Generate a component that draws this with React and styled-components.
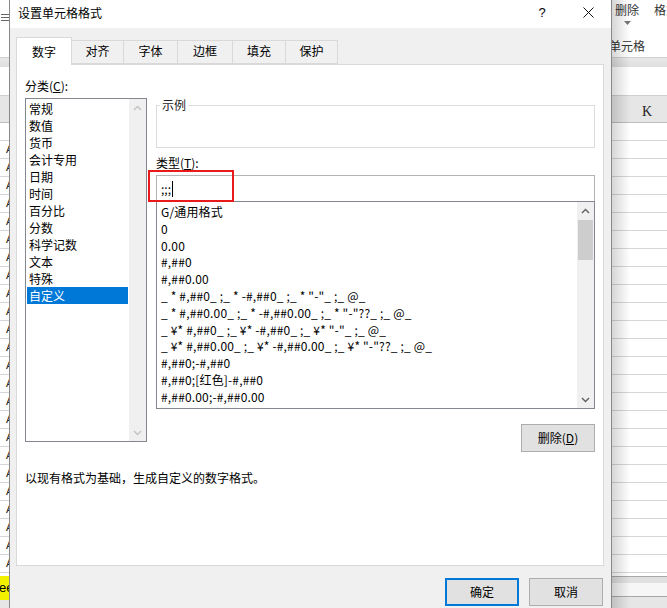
import React from 'react'
import styled, { createGlobalStyle } from 'styled-components'

const GlobalStyle = createGlobalStyle`
  html, body { margin: 0; padding: 0; }
  body {
    width: 667px;
    height: 608px;
    overflow: hidden;
    background: #fff;
    color: #000;
    font-family: "Noto Sans CJK SC", "Noto Sans", sans-serif;
    font-size: 12px;
  }
`

const categories = ['常规', '数值', '货币', '会计专用', '日期', '时间', '百分比', '分数', '科学记数', '文本', '特殊', '自定义']

const formats = [
  'G/通用格式',
  '0',
  '0.00',
  '#,##0',
  '#,##0.00',
  '_ * #,##0_ ;_ * -#,##0_ ;_ * "-"_ ;_ @_',
  '_ * #,##0.00_ ;_ * -#,##0.00_ ;_ * "-"??_ ;_ @_',
  '_ ¥* #,##0_ ;_ ¥* -#,##0_ ;_ ¥* "-"_ ;_ @_',
  '_ ¥* #,##0.00_ ;_ ¥* -#,##0.00_ ;_ ¥* "-"??_ ;_ @_',
  '#,##0;-#,##0',
  '#,##0;[红色]-#,##0',
  '#,##0.00;-#,##0.00',
]

const tabs = [
  { label: '数字', w: 56 },
  { label: '对齐', w: 53 },
  { label: '字体', w: 55 },
  { label: '边框', w: 56 },
  { label: '填充', w: 54 },
  { label: '保护', w: 53 },
]

const Screen = styled.div`
  display: flex;
  width: 667px;
  height: 608px;
  overflow: hidden;
`

/* ---------- excel backdrop ---------- */

const Strip = styled.div`
  position: relative;
  flex: ${p => (p.$grow ? 1 : 'none')};
  width: ${p => (p.$grow ? 'auto' : '9px')};
  display: flex;
  flex-direction: column;
  overflow: hidden;
  background: #fff;

  &::after {
    content: '';
    display: ${p => (p.$shadow ? 'block' : 'none')};
    position: absolute;
    left: 0;
    top: 0;
    bottom: 0;
    width: 18px;
    background: linear-gradient(to right, rgba(0, 0, 0, 0.16), rgba(0, 0, 0, 0));
    pointer-events: none;
  }
`

const Ribbon = styled.div`
  height: 57px;
  flex: none;
  display: flex;
  flex-direction: column;
  color: #333;
  white-space: nowrap;
`

const RibbonButtons = styled.div`
  display: flex;
  gap: 15px;
  padding: 2px 0 0 3px;
  line-height: 16px;
`

const RibbonButton = styled.div`
  display: flex;
  flex-direction: column;
  align-items: center;
  gap: 3px;
`

const RibbonLabel = styled.div`
  margin: 13px 0 0 -3px;
  line-height: 16px;
`

const MenuIcon = styled.div`
  padding: 8px 0 0 1px;
`

const Band = styled.div`
  height: 10px;
  flex: none;
  background: linear-gradient(#e9e9e9, #dedede);
  border-top: 1px solid #d0d0d0;
  box-sizing: border-box;
`

const FormulaBar = styled.div`
  height: 28px;
  flex: none;
  background: #fff;
`

const ColumnHeader = styled.div`
  height: 28px;
  flex: none;
  box-sizing: border-box;
  display: flex;
  align-items: flex-end;
  padding: 0 0 2px 30px;
  background: #e6e6e6;
  border-top: 1px solid #cfcfcf;
  border-bottom: 1px solid #bdbdbd;
  font-family: "Liberation Serif", serif;
  font-size: 14px;
  color: #222;
`

const Rows = styled.div`
  flex: 1;
  overflow: hidden;
`

const Row = styled.div`
  height: 17px;
  border-bottom: 1px solid #d6d6d6;
  padding-left: 6px;
  line-height: 17px;
  font-family: "Liberation Sans", sans-serif;
  font-size: 11px;
  color: #222;
  white-space: nowrap;
`

const SheetBar = styled.div`
  height: 32px;
  flex: none;
  display: flex;
  flex-direction: column;
  box-sizing: border-box;
  border-top: 1px solid #a8a8a8;
  background: #e6e6e6;
`

const SheetStripe = styled.div`
  height: 6px;
  background: #e0e0e0;
`

const SheetLane = styled.div`
  height: 13px;
  background: #f6f6f6;
  border-bottom: 1px solid #a8a8a8;
`

const SheetTab = styled.div`
  height: 24px;
  margin-top: -1px;
  background: #f2f200;
  line-height: 24px;
  font-family: "Liberation Sans", sans-serif;
  font-size: 13px;
  margin-left: -1px;
  white-space: nowrap;
`

/* ---------- dialog ---------- */

const Dialog = styled.div`
  width: 603px;
  flex: none;
  box-sizing: border-box;
  display: flex;
  flex-direction: column;
  background: #f0f0f0;
  border-left: 1px solid #8a8a8a;
  border-right: 1px solid #8a8a8a;
`

const TitleBar = styled.div`
  height: 28px;
  flex: none;
  display: flex;
  align-items: center;
  background: #fff;
  padding-left: 8px;
`

const Title = styled.div`
  flex: 1;
  line-height: 16px;
  margin-top: -2px;
`

const TitleButton = styled.div`
  width: 46px;
  height: 28px;
  display: flex;
  align-items: center;
  justify-content: center;
  margin-top: -3px;
  font-family: "Liberation Sans", sans-serif;
  font-size: 13px;
`

const Body = styled.div`
  padding: 9px 7px 0 6px;
  display: flex;
  flex-direction: column;
`

const TabRow = styled.div`
  height: 27px;
  display: flex;
  align-items: flex-end;
  position: relative;
  z-index: 1;
`

const Tab = styled.div`
  width: ${p => p.$w}px;
  height: ${p => (p.$active ? 28 : 24)}px;
  margin-left: -1px;
  margin-bottom: ${p => (p.$active ? -1 : 0)}px;
  box-sizing: border-box;
  display: flex;
  align-items: flex-end;
  justify-content: center;
  padding-bottom: ${p => (p.$active ? 5 : 4)}px;
  line-height: 16px;
  background: ${p => (p.$active ? '#fff' : '#f0f0f0')};
  border: 1px solid #d9d9d9;
  border-bottom: ${p => (p.$active ? 'none' : '1px solid #d9d9d9')};

  &:first-child { margin-left: 0; }
`

const Panel = styled.div`
  height: 502px;
  box-sizing: border-box;
  background: #fff;
  border: 1px solid #d9d9d9;
  padding: 13px 8px 0 8px;
`

const Columns = styled.div`
  display: flex;
  gap: 9px;
  align-items: flex-start;
`

const LeftColumn = styled.div`
  width: 122px;
  flex: none;
  display: flex;
  flex-direction: column;
`

const RightColumn = styled.div`
  flex: 1;
  display: flex;
  flex-direction: column;
  padding-top: 20px;
`

const FieldLabel = styled.div`
  line-height: 16px;
  margin-bottom: 4px;
  margin-top: ${p => p.$top || 0}px;
`

const ListBox = styled.div`
  height: ${p => p.$h}px;
  box-sizing: border-box;
  display: flex;
  border: 1px solid #828790;
  background: #fff;
`

const ListItems = styled.div`
  flex: 1;
  padding: ${p => p.$pad};
  overflow: hidden;
  letter-spacing: ${p => p.$spacing || 0}px;
`

const ListItem = styled.div`
  height: ${p => p.$h || 17}px;
  line-height: ${p => p.$h || 17}px;
  padding-left: ${p => p.$indent}px;
  white-space: pre;
  background: ${p => (p.$selected ? '#0078d7' : 'transparent')};
  color: ${p => (p.$selected ? '#fff' : '#000')};
`

const ScrollBar = styled.div`
  width: 17px;
  flex: none;
  display: flex;
  flex-direction: column;
  background: #f0f0f0;
`

const ScrollArrow = styled.div`
  height: 17px;
  flex: none;
  display: flex;
  align-items: center;
  justify-content: center;
`

const ScrollTrack = styled.div`
  flex: 1;
`

const ScrollThumb = styled.div`
  height: 40px;
  margin: 1px 1px 0;
  background: #cdcdcd;
`

const GroupBox = styled.fieldset`
  margin: 0;
  padding: 0;
  min-width: 0;
  border: 1px solid #dcdcdc;
`

const GroupLegend = styled.legend`
  margin-left: 3px;
  padding: 0 2px;
  line-height: 14px;
  color: #222;
`

const GroupBody = styled.div`
  height: 35px;
`

const InputWrap = styled.div`
  position: relative;
  height: 26px;
  box-sizing: border-box;
  display: flex;
  align-items: center;
  padding-left: 4px;
  border: 1px solid #b4b4b4;
  border-bottom: none;
  background: #fff;
`

const InputText = styled.span`
  line-height: 16px;
  margin-right: 1px;
`

const Caret = styled.span`
  width: 1px;
  height: 16px;
  background: #000;
`

const Highlight = styled.div`
  position: absolute;
  left: -9px;
  top: -6px;
  width: 86px;
  height: 32px;
  box-sizing: border-box;
  border: 2px solid #e81a1a;
  pointer-events: none;
`

const Button = styled.div`
  width: 74px;
  height: 28px;
  box-sizing: border-box;
  display: flex;
  align-items: center;
  justify-content: center;
  background: #e1e1e1;
  border: ${p => (p.$primary ? '2px solid #0078d7' : '1px solid #adadad')};
  line-height: 16px;
`

const DeleteButton = styled(Button)`
  align-self: flex-end;
  margin-top: 15px;
`

const Description = styled.div`
  margin-top: 18px;
  line-height: 16px;
`

const Footer = styled.div`
  display: flex;
  justify-content: flex-end;
  gap: 10px;
  padding: 12px 1px 0 0;
`

const Chevron = ({ down, color }) => (
  <svg width="9" height="6" viewBox="0 0 9 6">
    <polyline
      points={down ? '1,1 4.5,4.5 8,1' : '1,5 4.5,1.5 8,5'}
      fill="none"
      stroke={color}
      strokeWidth="1.4"
    />
  </svg>
)

const Backdrop = ({ side }) => {
  const right = side === 'right'
  return (
    <Strip $grow={right} $shadow={right}>
      <Ribbon>
        {right ? (
          <>
            <RibbonButtons>
              <RibbonButton>
                <span>删除</span>
                <svg width="7" height="4" viewBox="0 0 7 4">
                  <polygon points="0,0 7,0 3.5,4" fill="#777" />
                </svg>
              </RibbonButton>
              <span>格式</span>
            </RibbonButtons>
            <RibbonLabel>单元格</RibbonLabel>
          </>
        ) : (
          <MenuIcon>
            <svg width="8" height="9" viewBox="0 0 8 9">
              <path d="M0 1.5h8M0 4.5h8M0 7.5h8" stroke="#666" strokeWidth="1" />
            </svg>
          </MenuIcon>
        )}
      </Ribbon>
      <Band />
      <FormulaBar />
      <ColumnHeader>{right ? 'K' : ''}</ColumnHeader>
      <Rows>
        {Array.from({ length: 25 }, (_, i) => (
          <Row key={i}>{!right && i > 0 ? 'A' : ''}</Row>
        ))}
      </Rows>
      <SheetBar>
        {right ? (
          <>
            <SheetStripe />
            <SheetLane />
          </>
        ) : (
          <SheetTab>ee</SheetTab>
        )}
      </SheetBar>
    </Strip>
  )
}

const App = () => {
  return (
    <>
      <GlobalStyle />
      <Screen>
        <Backdrop side="left" />
        <Dialog>
          <TitleBar>
            <Title>设置单元格格式</Title>
            <TitleButton>?</TitleButton>
            <TitleButton>
              <svg width="11" height="11" viewBox="0 0 11 11">
                <path d="M0.5 0.5L10.5 10.5M10.5 0.5L0.5 10.5" stroke="#111" strokeWidth="1" />
              </svg>
            </TitleButton>
          </TitleBar>
          <Body>
            <TabRow>
              {tabs.map((t, i) => (
                <Tab key={t.label} $w={t.w} $active={i === 0}>{t.label}</Tab>
              ))}
            </TabRow>
            <Panel>
              <Columns>
                <LeftColumn>
                  <FieldLabel>分类(<u>C</u>):</FieldLabel>
                  <ListBox $h={344}>
                    <ListItems $pad="1px">
                      {categories.map((c, i) => (
                        <ListItem key={c} $indent={2} $selected={i === categories.length - 1}>{c}</ListItem>
                      ))}
                    </ListItems>
                    <ScrollBar>
                      <ScrollArrow><Chevron color="#c2c2c2" /></ScrollArrow>
                      <ScrollTrack />
                      <ScrollArrow><Chevron down color="#c2c2c2" /></ScrollArrow>
                    </ScrollBar>
                  </ListBox>
                </LeftColumn>
                <RightColumn>
                  <GroupBox>
                    <GroupLegend>示例</GroupLegend>
                    <GroupBody />
                  </GroupBox>
                  <FieldLabel $top={7}>类型(<u>T</u>):</FieldLabel>
                  <InputWrap>
                    <InputText>;;;</InputText>
                    <Caret />
                    <Highlight />
                  </InputWrap>
                  <ListBox $h={208}>
                    <ListItems $pad="2px 0 0 0" $spacing={0.16}>
                      {formats.map(f => (
                        <ListItem key={f} $indent={4} $h={16.8}>{f}</ListItem>
                      ))}
                    </ListItems>
                    <ScrollBar>
                      <ScrollArrow><Chevron color="#606060" /></ScrollArrow>
                      <ScrollTrack>
                        <ScrollThumb />
                      </ScrollTrack>
                      <ScrollArrow><Chevron down color="#606060" /></ScrollArrow>
                    </ScrollBar>
                  </ListBox>
                  <DeleteButton>删除(<u>D</u>)</DeleteButton>
                </RightColumn>
              </Columns>
              <Description>以现有格式为基础，生成自定义的数字格式。</Description>
            </Panel>
            <Footer>
              <Button $primary>确定</Button>
              <Button>取消</Button>
            </Footer>
          </Body>
        </Dialog>
        <Backdrop side="right" />
      </Screen>
    </>
  )
}

export default App
